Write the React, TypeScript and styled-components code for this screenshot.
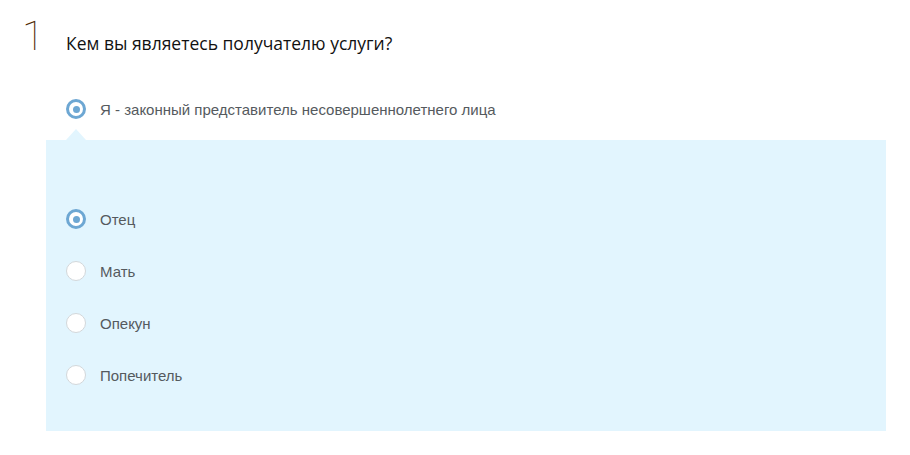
import React, { useState } from "react";
import styled, { createGlobalStyle } from "styled-components";

const Global = createGlobalStyle`
  html, body { margin: 0; padding: 0; background: #ffffff; }
  body { font-family: "Liberation Sans", Arial, sans-serif; }
`;

const Page = styled.div`
  width: 910px;
  height: 455px;
  box-sizing: border-box;
  padding: 0 24px 0 46px;
  overflow: hidden;
`;

const Header = styled.div`
  display: flex;
  align-items: flex-start;
  margin-left: -24px;
  padding-top: 16px;
  height: 70px;
  box-sizing: border-box;
`;

const StepNumber = styled.div`
  width: 44px;
  font-family: Roboto, "Liberation Sans", sans-serif;
  font-weight: 100;
  font-size: 41px;
  line-height: 41px;
  color: #4f2a05;
`;

const Title = styled.h2`
  margin: 0;
  padding-top: 15px;
  font-family: "Open Sans", "Liberation Sans", sans-serif;
  font-weight: 400;
  font-size: 17.5px;
  line-height: 24px;
  color: #111111;
`;

const Row = styled.label`
  display: flex;
  align-items: center;
  gap: 14px;
  height: 52px;
  padding-left: 20px;
  cursor: pointer;
`;

const Radio = styled.span<{ $checked: boolean }>`
  position: relative;
  width: 20px;
  height: 20px;
  box-sizing: border-box;
  border-radius: 50%;
  background: #ffffff;
  border: ${(p) => (p.$checked ? "3px solid #6da7d3" : "1px solid #d3d7da")};
  flex: none;
  &::after {
    content: "";
    display: ${(p) => (p.$checked ? "block" : "none")};
    position: absolute;
    left: 50%;
    top: 50%;
    width: 7px;
    height: 7px;
    margin: -3.5px 0 0 -3.5px;
    border-radius: 50%;
    background: #6da7d3;
  }
`;

const Label = styled.span`
  font-family: "Liberation Sans", Arial, sans-serif;
  font-size: 15px;
  color: #555a5e;
`;

const TopOption = styled.div`
  margin-top: 13px;
`;

const Panel = styled.div`
  position: relative;
  margin-top: 5px;
  background: #e2f5fe;
  padding: 53px 0 30px;
  &::before {
    content: "";
    position: absolute;
    left: 20px;
    top: -11px;
    border-left: 10px solid transparent;
    border-right: 10px solid transparent;
    border-bottom: 11px solid #e2f5fe;
  }
`;

const options = ["Отец", "Мать", "Опекун", "Попечитель"];

export default function App() {
  const [sel, setSel] = useState(0);
  return (
    <>
      <Global />
      <Page>
        <Header>
          <StepNumber>1</StepNumber>
          <Title>Кем вы являетесь получателю услуги?</Title>
        </Header>
        <TopOption>
          <Row>
            <Radio $checked />
            <Label>Я - законный представитель несовершеннолетнего лица</Label>
          </Row>
        </TopOption>
        <Panel>
          {options.map((o, i) => (
            <Row key={o} onClick={() => setSel(i)}>
              <Radio $checked={sel === i} />
              <Label>{o}</Label>
            </Row>
          ))}
        </Panel>
      </Page>
    </>
  );
}
